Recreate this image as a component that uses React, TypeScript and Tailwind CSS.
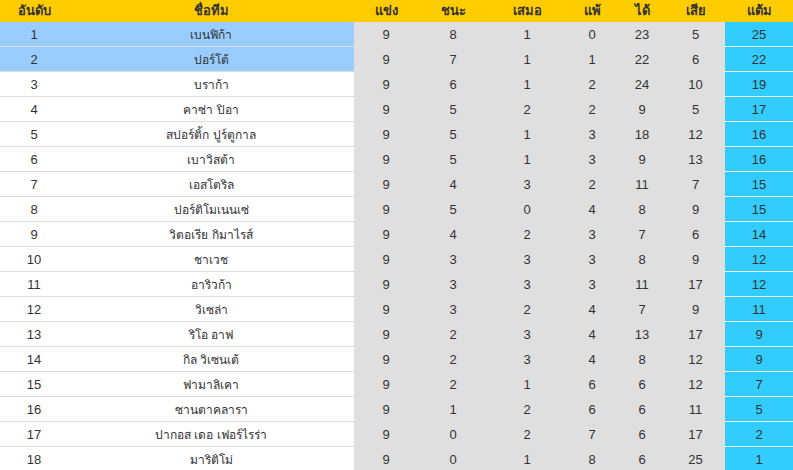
import React from 'react';

const COLS = 'grid grid-cols-[68px_286px_64px_70px_78px_52px_48px_59px_68px]';

const HEAD = ['อันดับ', 'ชื่อทีม', 'แข่ง', 'ชนะ', 'เสมอ', 'แพ้', 'ได้', 'เสีย', 'แต้ม'];

// [team, played, won, drawn, lost, for, against, points]
const ROWS: [string, number, number, number, number, number, number, number][] = [
  ['เบนฟิก้า', 9, 8, 1, 0, 23, 5, 25],
  ['ปอร์โต้', 9, 7, 1, 1, 22, 6, 22],
  ['บราก้า', 9, 6, 1, 2, 24, 10, 19],
  ['คาซ่า ปิอา', 9, 5, 2, 2, 9, 5, 17],
  ['สปอร์ติ้ก ปูร์ตูกาล', 9, 5, 1, 3, 18, 12, 16],
  ['เบาวิสต้า', 9, 5, 1, 3, 9, 13, 16],
  ['เอสโตริล', 9, 4, 3, 2, 11, 7, 15],
  ['ปอร์ติโมเนนเซ่', 9, 5, 0, 4, 8, 9, 15],
  ['วิตอเรีย กิมาไรส์', 9, 4, 2, 3, 7, 6, 14],
  ['ชาเวช', 9, 3, 3, 3, 8, 9, 12],
  ['อาริวก้า', 9, 3, 3, 3, 11, 17, 12],
  ['วิเซล่า', 9, 3, 2, 4, 7, 9, 11],
  ['ริโอ อาฟ', 9, 2, 3, 4, 13, 17, 9],
  ['กิล วิเซนเต้', 9, 2, 3, 4, 8, 12, 9],
  ['ฟามาลิเคา', 9, 2, 1, 6, 6, 12, 7],
  ['ซานตาคลารา', 9, 1, 2, 6, 6, 11, 5],
  ['ปากอส เดอ เฟอร์ไรร่า', 9, 0, 2, 7, 6, 17, 2],
  ['มาริติโม่', 9, 0, 1, 8, 6, 25, 1],
];

export default function App() {
  return (
    <div className="w-[793px] h-[470px] overflow-hidden bg-white text-[13px] text-[#333] font-['Liberation_Sans',Arial,sans-serif]">
      <div className={`${COLS} h-[22px] bg-[#ffcc00] font-bold text-[#333]`}>
        {HEAD.map((h) => (
          <div key={h} className="flex items-center justify-center">
            {h}
          </div>
        ))}
      </div>
      {ROWS.map((r, i) => {
        const first = i < 2 ? 'bg-[#99ccff]' : 'bg-white';
        return (
          <div key={r[0]} className={`${COLS} h-[25px]`}>
            <div className={`flex items-center justify-center pt-px border-b border-[#dedede] ${first}`}>{i + 1}</div>
            <div className={`flex items-center justify-center pt-px text-[12px] border-b border-[#dedede] ${first}`}>
              {r[0]}
            </div>
            {r.slice(1, 7).map((v, j) => (
              <div key={j} className="flex items-center justify-center pt-px border-b border-[#dfdfdf] bg-[#dfdfdf]">
                {v}
              </div>
            ))}
            <div className="flex items-center justify-center pt-px border-b border-[#e8f6fc] bg-[#33ccff]">{r[7]}</div>
          </div>
        );
      })}
    </div>
  );
}
